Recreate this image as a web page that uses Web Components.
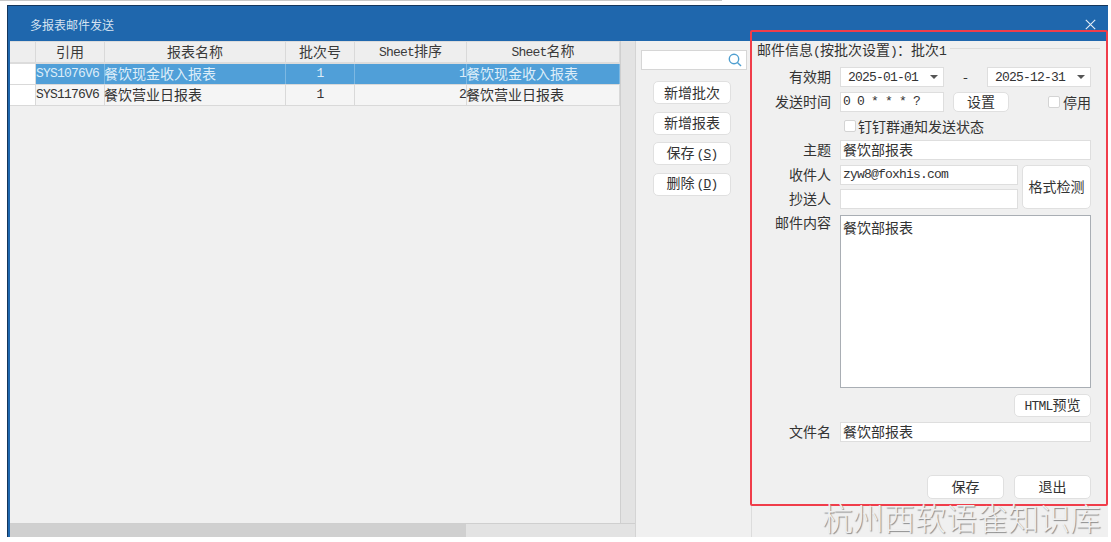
<!DOCTYPE html>
<html lang="zh">
<head>
<meta charset="utf-8">
<title>多报表邮件发送</title>
<style>
  html, body { margin: 0; padding: 0; background: #fff; }
  body { font-family: "Noto Sans CJK SC", sans-serif; font-size: 14px; color: #333; }
</style>
</head>
<body>
<report-mail-app></report-mail-app>
<script>
const BASE = `
  * { box-sizing: border-box; }
  .m.m { font-family: "Liberation Mono", monospace; font-size: 13px; letter-spacing: -.8px; }
`;

class MailButton extends HTMLElement {
  connectedCallback() {
    this.attachShadow({ mode: 'open' });
    this.shadowRoot.innerHTML = `
      <style>
        :host {
          display: flex;
          align-items: center;
          justify-content: center;
          background: #fff;
          border: 1px solid #e0e0e0;
          border-radius: 5px;
          padding-bottom: 2px;
          font-size: 14px;
          line-height: 1;
          color: #333;
          white-space: nowrap;
        }
      </style>
      <span><slot></slot></span>
    `;
  }
}
customElements.define('mail-button', MailButton);

class MailInput extends HTMLElement {
  connectedCallback() {
    this.attachShadow({ mode: 'open' });
    this.shadowRoot.innerHTML = `
      <style>
        :host {
          display: flex;
          align-items: center;
          background: #fff;
          border: 1px solid #dedede;
          padding: 0 2px 2px;
          font-size: 14px;
          line-height: 1;
          color: #333;
          white-space: nowrap;
          overflow: hidden;
        }
        :host([select]) { justify-content: space-between; padding: 0 5px 0 7px; }
        :host([select])::after {
          content: "";
          border-left: 4px solid transparent;
          border-right: 4px solid transparent;
          border-top: 4px solid #555;
        }
      </style>
      <slot></slot>
    `;
  }
}
customElements.define('mail-input', MailInput);

class MailCheck extends HTMLElement {
  connectedCallback() {
    this.attachShadow({ mode: 'open' });
    this.shadowRoot.innerHTML = `
      <style>
        :host { display: inline-flex; align-items: center; gap: 3px; font-size: 14px; line-height: 1; color: #333; white-space: nowrap; }
        i { width: 10px; height: 10px; background: #fff; border: 1px solid #d4d4d4; border-radius: 2px; }
      </style>
      <i></i><slot></slot>
    `;
  }
}
customElements.define('mail-check', MailCheck);

class ReportGrid extends HTMLElement {
  connectedCallback() {
    const cols = '26px 69px 181px 69px 112px 153px';
    const rows = [
      ['SYS1076V6', '餐饮现金收入报表', '1', '1', '餐饮现金收入报表'],
      ['SYS1176V6', '餐饮营业日报表', '1', '2', '餐饮营业日报表']
    ];
    const body = rows.map((r, i) => `
      <div class="row ${i === 0 ? 'sel' : ''}">
        <div class="c gut"></div>
        <div class="c m">${r[0]}</div>
        <div class="c"><span class="cn">${r[1]}</span></div>
        <div class="c m mid">${r[2]}</div>
        <div class="c m end">${r[3]}</div>
        <div class="c"><span class="cn">${r[4]}</span></div>
      </div>`).join('');
    this.attachShadow({ mode: 'open' });
    this.shadowRoot.innerHTML = `
      <style>
        ${BASE}
        :host { display: flex; flex-direction: column; flex: 1; min-height: 0; background: #f0f0f0; }
        .main { flex: 1; display: flex; min-height: 0; }
        .table { width: 610px; }
        .row { display: grid; grid-template-columns: ${cols}; height: 21px; border-bottom: 1px solid #d9d9d9; background: #f5f5f5; color: #333; }
        .row.head { height: 23px; background: #eeeeee; border-top: 1px solid #dcdcdc; border-bottom: 2px solid #dcdcdc; }
        .row.head .c { justify-content: center; color: #3a3a3a; }
        .c { display: flex; align-items: center; padding-bottom: 2px; border-right: 1px solid #d9d9d9; font-size: 14px; line-height: 1; white-space: nowrap; }
        .cn { margin-left: -1px; }
        .gut { background: #fff; }
        .head .gut { background: #eeeeee; }
        .mid { justify-content: center; }
        .end { justify-content: flex-end; }
        .row.sel { background: #509fd8; color: #dcedf9; }
        .row.sel .c { border-right-color: #7db8e2; }
        .row.sel .gut { background: #fff; border-right-color: #d9d9d9; }
        .vbar { width: 15px; background: #e3e3e3; border-left: 1px solid #cfcfcf; }
        .hbar { height: 14px; display: flex; background: #e3e3e3; border-top: 1px solid #cfcfcf; }
        .thumb { width: 456px; background: #d0d0d0; }
      </style>
      <div class="main">
        <div class="table">
          <div class="row head">
            <div class="c gut"></div>
            <div class="c">引用</div>
            <div class="c">报表名称</div>
            <div class="c">批次号</div>
            <div class="c"><span><span class="m">Sheet</span>排序</span></div>
            <div class="c"><span><span class="m">Sheet</span>名称</span></div>
          </div>
          ${body}
        </div>
        <div class="vbar"></div>
      </div>
      <div class="hbar"><div class="thumb"></div></div>
    `;
  }
}
customElements.define('report-grid', ReportGrid);

class BatchActions extends HTMLElement {
  connectedCallback() {
    this.attachShadow({ mode: 'open' });
    this.shadowRoot.innerHTML = `
      <style>
        ${BASE}
        :host { display: flex; flex-direction: column; width: 116px; padding: 9px 4px 0 5px; border-left: 1px solid #d4d4d4; background: #f0f0f0; }
        .search { height: 20px; display: flex; justify-content: flex-end; align-items: center; padding-right: 4px; background: #fff; border: 1px solid #d6d6d6; }
        .btns { display: flex; flex-direction: column; gap: 7.5px; width: 78px; margin: 11px 0 0 12px; }
        mail-button { height: 23px; }
        u { text-decoration-thickness: 1px; }
      </style>
      <div class="search">
        <svg width="14" height="14" viewBox="0 0 14 14" fill="none" stroke="#4f9fd0" stroke-width="1.4">
          <circle cx="6" cy="6" r="4.7"/><path d="M9.4 9.4L13 13"/>
        </svg>
      </div>
      <div class="btns">
        <mail-button>新增批次</mail-button>
        <mail-button>新增报表</mail-button>
        <mail-button>保存<span class="m" style="margin-left:2px">(<u>S</u>)</span></mail-button>
        <mail-button>删除<span class="m" style="margin-left:2px">(<u>D</u>)</span></mail-button>
      </div>
    `;
  }
}
customElements.define('batch-actions', BatchActions);

class MailForm extends HTMLElement {
  connectedCallback() {
    this.attachShadow({ mode: 'open' });
    this.shadowRoot.innerHTML = `
      <style>
        ${BASE}
        :host { display: block; flex: 1; padding: 2px 17px 0 5px; border-left: 1px solid #dcdcdc; background: #f0f0f0; font-size: 14px; color: #333; }
        .legend { display: flex; align-items: center; gap: 4px; height: 14px; line-height: 14px; white-space: nowrap; }
        .legend::after { content: ""; flex: 1; height: 1px; margin: 0 -9px 4px 0; background: #dcdcdc; }
        .form { display: grid; grid-template-columns: 74px 1fr; column-gap: 9px; margin-top: 10px; }
        .lab { display: flex; justify-content: flex-end; align-items: center; padding-bottom: 2px; line-height: 1; white-space: nowrap; }
        .h20 { height: 20px; }
        .split { display: grid; grid-template-columns: 104px 1fr 104px; align-items: center; text-align: center; line-height: 1; }
        .split > span { padding-bottom: 3px; }
        .send { display: flex; align-items: center; justify-content: space-between; }
        .mail { display: grid; grid-template-columns: 178px 69px; grid-template-rows: 20px 20px; column-gap: 4px; row-gap: 4px; }
        .right { display: flex; justify-content: flex-end; gap: 10px; }
      </style>
      <div class="legend"><span>邮件信息<span class="m">(</span>按批次设置<span class="m">)</span>：批次<span class="m">1</span></span></div>
      <div class="form">
        <div class="lab h20">有效期</div>
        <div class="split h20">
          <mail-input select class="h20"><span class="m">2025-01-01</span></mail-input>
          <span>-</span>
          <mail-input select class="h20"><span class="m">2025-12-31</span></mail-input>
        </div>

        <div class="lab" style="height:20px;margin-top:5px">发送时间</div>
        <div class="send" style="height:20px;margin-top:5px">
          <mail-input style="width:104px;height:20px"><span class="m">0 0 * * * ?</span></mail-input>
          <mail-button style="width:56px;height:20px;margin-left:9px">设置</mail-button>
          <mail-check style="margin-left:auto">停用</mail-check>
        </div>

        <div style="height:18px;margin-top:6px"></div>
        <div style="height:18px;margin-top:6px;padding:0 0 2px 4px;display:flex;align-items:center"><mail-check style="gap:2px">钉钉群通知发送状态</mail-check></div>

        <div class="lab" style="height:20px;margin-top:4px">主题</div>
        <mail-input style="height:20px;margin-top:4px">餐饮部报表</mail-input>

        <div style="margin-top:5px;display:grid;grid-template-rows:20px 20px;gap:4px">
          <div class="lab">收件人</div>
          <div class="lab">抄送人</div>
        </div>
        <div class="mail" style="margin-top:5px">
          <mail-input><span class="m">zyw8@foxhis.com</span></mail-input>
          <mail-button style="grid-row:span 2">格式检测</mail-button>
          <mail-input></mail-input>
        </div>

        <div class="lab" style="height:16px;margin-top:6px">邮件内容</div>
        <mail-input style="margin-top:6px;height:173px;padding-top:4px;align-items:flex-start;border-color:#a9aeb4">餐饮部报表</mail-input>

        <div></div>
        <div class="right" style="margin-top:6px"><mail-button style="width:77px;height:23px"><span class="m">HTML</span>预览</mail-button></div>

        <div class="lab" style="height:20px;margin-top:5px">文件名</div>
        <mail-input style="height:20px;margin-top:5px">餐饮部报表</mail-input>

        <div></div>
        <div class="right" style="margin-top:33px">
          <mail-button style="width:77px;height:24px">保存</mail-button>
          <mail-button style="width:77px;height:24px">退出</mail-button>
        </div>
      </div>
    `;
  }
}
customElements.define('mail-form', MailForm);

class ReportMailApp extends HTMLElement {
  connectedCallback() {
    this.attachShadow({ mode: 'open' });
    this.shadowRoot.innerHTML = `
      <style>
        ${BASE}
        :host { display: block; position: relative; width: 1111px; height: 542px; overflow: hidden; background: #fff; }
        .topline { height: 5px; }
        .topline div { width: 722px; height: 1px; background: #c8c8c8; }
        .win { width: 1101px; height: 532px; margin-left: 7px; display: flex; flex-direction: column; background: #1f67ad; border-top: 1px solid #14365c; border-left: 1px solid #14365c; }
        .title { height: 35px; display: flex; align-items: center; justify-content: space-between; padding: 2px 12px 0 22px; color: #d5e3f1; font-size: 12px; }
        .body { flex: 1; display: flex; min-height: 0; margin-left: 2px; }
        .left { width: 625px; display: flex; }
        .mark {
          position: absolute; left: 822px; top: 498px;
          font-size: 31px; line-height: 38px; white-space: nowrap; color: #f0f0f0;
          text-shadow: 1px 1px 1px #8a8a8a; font-weight: 300;
        }
        .red { position: absolute; left: 750px; top: 30px; width: 358px; height: 476px; border: 2px solid #f03d4a; border-radius: 2px; pointer-events: none; }
      </style>
      <div class="topline"><div></div></div>
      <div class="win">
        <div class="title">
          <span>多报表邮件发送</span>
          <svg width="11" height="11" viewBox="0 0 11 11" stroke="#e6eef7" stroke-width="1.1" fill="none"><path d="M.8.8l9.4 9.4M10.2.8L.8 10.2"/></svg>
        </div>
        <div class="body">
          <div class="left"><report-grid></report-grid></div>
          <batch-actions></batch-actions>
          <mail-form></mail-form>
        </div>
      </div>
      <div class="red"></div>
      <div class="mark">杭州西软语雀知识库</div>
    `;
  }
}
customElements.define('report-mail-app', ReportMailApp);
</script>
</body>
</html>
